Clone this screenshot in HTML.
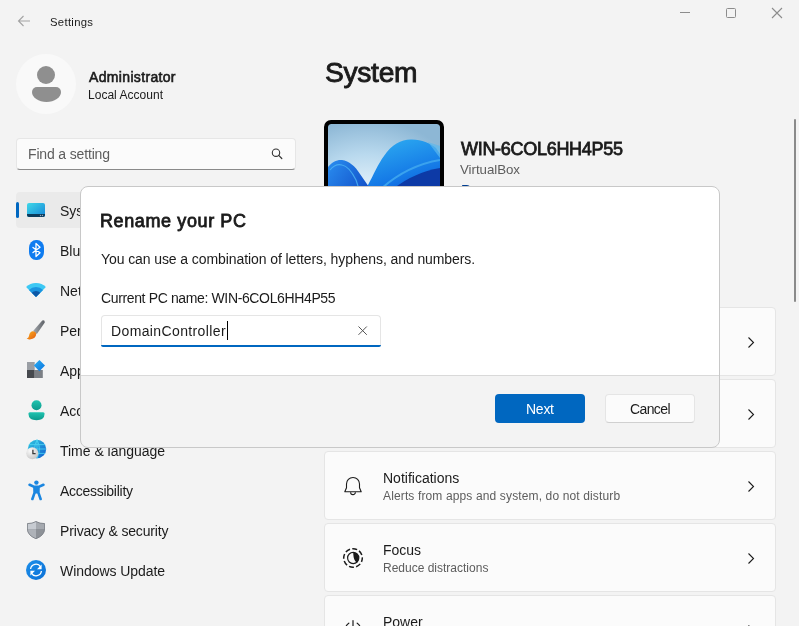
<!DOCTYPE html>
<html><head><meta charset="utf-8"><style>
html,body{margin:0;padding:0;}
body{width:799px;height:626px;overflow:hidden;background:#f3f3f3;position:relative;font-family:"Liberation Sans",sans-serif;}
.t{position:absolute;white-space:nowrap;will-change:transform;}
.r,.a{position:absolute;box-sizing:content-box;}
</style></head><body>
<svg class="a" style="left:17px;top:15px" width="14" height="12" viewBox="0 0 14 12"><path d="M1.5 6H13M6.5 1L1.5 6L6.5 11" fill="none" stroke="#a3a3a3" stroke-width="1.1"/></svg>
<div class="t" style="left:50.30px;top:11.78px;font-size:11.3px;line-height:20px;color:#1b1b1b;letter-spacing:0.310px;">Settings</div>
<div class="r" style="left:680px;top:12px;width:10px;height:1px;background:#8c8c8c"></div>
<div class="r" style="left:726px;top:8px;width:8px;height:8px;border:1px solid #8c8c8c;border-radius:1.5px"></div>
<svg class="a" style="left:771px;top:7px" width="12" height="12" viewBox="0 0 12 12"><path d="M1 1L11 11M11 1L1 11" stroke="#8c8c8c" stroke-width="1.1"/></svg>
<div class="r" style="left:16px;top:54px;width:60px;height:60px;border-radius:50%;background:#f9f9f9"></div>
<div class="r" style="left:37px;top:66px;width:18px;height:18px;border-radius:50%;background:#8f8f8f"></div>
<div class="r" style="left:31.5px;top:86.5px;width:29px;height:15px;border-radius:5px 5px 14.5px 14.5px/5px 5px 10px 10px;background:#8f8f8f"></div>
<div class="t" style="left:88.60px;top:67.15px;font-size:14px;line-height:20px;color:#1b1b1b;-webkit-text-stroke:0.6px #1b1b1b;letter-spacing:0.339px;">Administrator</div>
<div class="t" style="left:88.40px;top:84.84px;font-size:12px;line-height:20px;color:#1b1b1b;letter-spacing:0.025px;">Local Account</div>
<div class="r" style="left:16px;top:138px;width:278px;height:30px;border:1px solid #e6e6e6;border-bottom:1px solid #8a8a8a;border-radius:4px;background:#fbfbfb"></div>
<div class="t" style="left:27.75px;top:143.85px;font-size:14px;line-height:20px;color:#5d5d5d;letter-spacing:-0.155px;">Find a setting</div>
<svg class="a" style="left:270px;top:147px" width="14" height="14" viewBox="0 0 14 14"><circle cx="6" cy="5.7" r="3.7" fill="none" stroke="#333" stroke-width="1.1"/><path d="M8.7 8.4L11.8 11.5" stroke="#333" stroke-width="1.2" stroke-linecap="round"/></svg>
<div class="r" style="left:16px;top:192px;width:280px;height:36px;border-radius:4px;background:#eaeaea"></div>
<div class="r" style="left:16px;top:202px;width:3px;height:16px;border-radius:2px;background:#0067c0"></div>
<svg class="a" style="left:27px;top:203px" width="18" height="14" viewBox="0 0 18 14"><defs><linearGradient id="gs" x1="0" y1="0" x2="1" y2="1"><stop offset="0" stop-color="#40d8e8"/><stop offset="1" stop-color="#1585d8"/></linearGradient><clipPath id="cs"><rect width="18" height="14" rx="2"/></clipPath></defs><g clip-path="url(#cs)"><rect width="18" height="14" fill="url(#gs)"/><rect y="11" width="18" height="3" fill="#0b3b5c"/><circle cx="13.5" cy="12.5" r="0.7" fill="#9ab"/><circle cx="15.5" cy="12.5" r="0.7" fill="#9ab"/></g></svg>
<svg class="a" style="left:28.5px;top:240px" width="15" height="20" viewBox="0 0 15 20"><rect width="15" height="20" rx="7" ry="8" fill="#0f7cf0"/><path d="M4 7.5L11 12.8L7 16.6V3.4L11 7.2L4 12.5" fill="none" stroke="#fff" stroke-width="1.3" stroke-linejoin="round" stroke-linecap="round"/></svg>
<svg class="a" style="left:26px;top:283px" width="20" height="14" viewBox="0 0 20 14"><path d="M10 14L0.1 4.1A14 14 0 0 1 19.9 4.1Z" fill="#3cc8f4"/><path d="M10 14L2.93 6.93A10 10 0 0 1 17.07 6.93Z" fill="#1a94e0"/><path d="M10 14L5.76 9.76A6 6 0 0 1 14.24 9.76Z" fill="#0c57a6"/></svg>
<svg class="a" style="left:26px;top:320px" width="20" height="20" viewBox="0 0 20 20"><defs><linearGradient id="gb" x1="0" y1="0" x2="1" y2="1"><stop offset="0" stop-color="#f9b320"/><stop offset="1" stop-color="#e45a10"/></linearGradient><linearGradient id="gh" x1="0" y1="0" x2="1" y2="0"><stop offset="0" stop-color="#a3a7ad"/><stop offset="1" stop-color="#5d6166"/></linearGradient></defs><path d="M16.24 0.52Q18.9 -0.6 18.76 2.48L10.9 13.96L7.1 11.04Z" fill="url(#gh)"/><path d="M6.5 11.2Q9.7 10.8 10.3 13.8Q10 18.8 3.8 19.4Q1.8 19.6 0.6 18.6Q2.6 18 3 16Q3.6 11.6 6.5 11.2Z" fill="url(#gb)"/></svg>
<svg class="a" style="left:27px;top:360px" width="18" height="18" viewBox="0 0 18 18"><rect x="0" y="2" width="7.7" height="8" fill="#9a9ea4"/><rect x="0" y="10" width="7.7" height="8" fill="#46494e"/><rect x="7.7" y="10" width="8.1" height="8" fill="#7b7f85"/><defs><linearGradient id="ga" x1="0" y1="0" x2="1" y2="1"><stop offset="0" stop-color="#2bb0f5"/><stop offset="1" stop-color="#0a72dc"/></linearGradient></defs><path d="M12.4 0L18 5.6L12.4 11.2L6.8 5.6Z" fill="url(#ga)"/></svg>
<svg class="a" style="left:27.5px;top:399.5px" width="17" height="21" viewBox="0 0 17 21"><defs><linearGradient id="gt" x1="0" y1="0" x2="0" y2="1"><stop offset="0" stop-color="#20c4b0"/><stop offset="1" stop-color="#0c9a8c"/></linearGradient></defs><circle cx="8.5" cy="5.2" r="5" fill="url(#gt)"/><path d="M1.8 12.2H15.2Q16.6 12.2 16.6 13.8Q16.4 20.2 8.5 20.2Q0.6 20.2 0.4 13.8Q0.4 12.2 1.8 12.2Z" fill="url(#gt)"/></svg>
<svg class="a" style="left:26px;top:439px" width="21" height="21" viewBox="0 0 21 21"><defs><linearGradient id="gg" x1="0" y1="0" x2="1" y2="1"><stop offset="0" stop-color="#30c8e0"/><stop offset="1" stop-color="#0f5fd0"/></linearGradient><radialGradient id="gc" cx="0.35" cy="0.3" r="0.8"><stop offset="0" stop-color="#fafafa"/><stop offset="1" stop-color="#c4c4c4"/></radialGradient></defs><circle cx="11" cy="10" r="9.2" fill="url(#gg)"/><path d="M11 0.8V19.2M1.8 10H20.2M2.8 5.6H19.2M2.8 14.4H19.2M11 0.8Q6.2 10 11 19.2M11 0.8Q15.8 10 11 19.2" fill="none" stroke="#4fd6f2" stroke-width="1" opacity="0.8"/><circle cx="6.3" cy="14.2" r="6" fill="url(#gc)"/><path d="M6.9 10.8V14.6H9.6" fill="none" stroke="#3a3a3a" stroke-width="1.3"/></svg>
<svg class="a" style="left:27.5px;top:479.5px" width="17" height="21" viewBox="0 0 17 21"><circle cx="8.4" cy="2.6" r="2.2" fill="#1a86e0"/><path d="M1.6 4.8L6.2 6.9H10.8L15.4 4.8M6.6 7V12.6L4.4 19M10.4 7V12.6L12.6 19" fill="none" stroke="#1a86e0" stroke-width="2.6" stroke-linecap="round" stroke-linejoin="round"/><path d="M5.4 6.4H11.4L10.8 13.6H6Z" fill="#1a86e0"/></svg>
<svg class="a" style="left:27px;top:521px" width="18" height="18" viewBox="0 0 18 18"><defs><clipPath id="cp"><path d="M9 0.5Q12.5 2.6 17.6 2.6V8Q17.6 14.2 9 17.8Q0.4 14.2 0.4 8V2.6Q5.5 2.6 9 0.5Z"/></clipPath></defs><g clip-path="url(#cp)"><rect width="18" height="18" fill="#8a8e94"/><rect x="0" y="0" width="9" height="8.2" fill="#c7cbd1"/><rect x="9" y="0" width="9" height="8.2" fill="#a5a9af"/><rect x="0" y="8.2" width="9" height="10" fill="#aeb2b8"/><rect x="9" y="8.2" width="9" height="10" fill="#8d9197"/></g><path d="M9 0.5Q12.5 2.6 17.6 2.6V8Q17.6 14.2 9 17.8Q0.4 14.2 0.4 8V2.6Q5.5 2.6 9 0.5Z" fill="none" stroke="#7f838a" stroke-width="0.9"/></svg>
<svg class="a" style="left:26px;top:560px" width="20" height="20" viewBox="0 0 20 20"><defs><linearGradient id="gu" x1="0" y1="0" x2="1" y2="1"><stop offset="0" stop-color="#1e90ea"/><stop offset="1" stop-color="#0a6fd6"/></linearGradient></defs><circle cx="10" cy="10" r="10" fill="url(#gu)"/><path d="M4.6 9A5.4 5.4 0 0 1 14.6 6.8M15.4 11A5.4 5.4 0 0 1 5.4 13.2" fill="none" stroke="#fff" stroke-width="1.3"/><path d="M15.6 4.5V9.3H11Z M4.4 15.5V10.7H9Z" fill="#fff"/></svg>
<div class="t" style="left:59.80px;top:200.65px;font-size:14px;line-height:20px;color:#1b1b1b;">System</div>
<div class="t" style="left:59.80px;top:240.65px;font-size:14px;line-height:20px;color:#1b1b1b;">Bluetooth &amp; devices</div>
<div class="t" style="left:59.80px;top:280.65px;font-size:14px;line-height:20px;color:#1b1b1b;">Network &amp; internet</div>
<div class="t" style="left:59.80px;top:320.65px;font-size:14px;line-height:20px;color:#1b1b1b;">Personalization</div>
<div class="t" style="left:59.80px;top:360.65px;font-size:14px;line-height:20px;color:#1b1b1b;">Apps</div>
<div class="t" style="left:59.80px;top:400.65px;font-size:14px;line-height:20px;color:#1b1b1b;">Accounts</div>
<div class="t" style="left:59.80px;top:440.65px;font-size:14px;line-height:20px;color:#1b1b1b;letter-spacing:-0.020px;">Time &amp; language</div>
<div class="t" style="left:59.80px;top:480.65px;font-size:14px;line-height:20px;color:#1b1b1b;letter-spacing:-0.270px;">Accessibility</div>
<div class="t" style="left:59.80px;top:520.65px;font-size:14px;line-height:20px;color:#1b1b1b;letter-spacing:-0.161px;">Privacy &amp; security</div>
<div class="t" style="left:59.80px;top:560.65px;font-size:14px;line-height:20px;color:#1b1b1b;letter-spacing:-0.061px;">Windows Update</div>

<div class="t" style="left:324.50px;top:62.22px;font-size:28.2px;line-height:20px;color:#1b1b1b;-webkit-text-stroke:0.9px #1b1b1b;letter-spacing:-0.294px;">System</div>
<div class="r" style="left:324px;top:120px;width:112px;height:90px;border:4px solid #000;border-radius:7px;overflow:hidden;background:#000"><svg width="112" height="90" viewBox="0 0 112 90" style="display:block;border-radius:3px"><defs><radialGradient id="wb" cx="0.35" cy="0.8" r="0.85"><stop offset="0" stop-color="#eef7fd"/><stop offset="0.55" stop-color="#b9d9ee"/><stop offset="1" stop-color="#8db7d5"/></radialGradient><linearGradient id="w1" x1="0" y1="0" x2="0.3" y2="1"><stop offset="0" stop-color="#2fb0f2"/><stop offset="0.6" stop-color="#1478e6"/><stop offset="1" stop-color="#0a4ad0"/></linearGradient><linearGradient id="w2" x1="0" y1="0" x2="1" y2="1"><stop offset="0" stop-color="#2a8ef0"/><stop offset="1" stop-color="#0a3cbc"/></linearGradient></defs><rect width="112" height="90" fill="url(#wb)"/><path d="M39.5 62C46 50 50 40 56 32C64 20 74 15 84 15.5C94 16 102 19 108 24L112 30V90H39.5Z" fill="url(#w1)"/><path d="M100 18L112 22V34Z" fill="#5cb8ec" opacity="0.7"/><path d="M0 43C4 38 9 35.5 14 36C21 37 27 42 32 50L41 63V90H0Z" fill="url(#w2)"/><path d="M2 46C6 41 10 40 14 41C20 42 24 48 28 56L30 62" fill="none" stroke="#4fb6f4" stroke-width="1.2" opacity="0.8"/><path d="M66 64C80 54 94 47 112 44V90H66Z" fill="#0d3aa6"/><path d="M54 64C70 50 88 40 112 36" fill="none" stroke="#3aa2ee" stroke-width="2"/></svg></div>
<div class="t" style="left:461.00px;top:138.66px;font-size:18px;line-height:20px;color:#1b1b1b;-webkit-text-stroke:0.8px #1b1b1b;letter-spacing:-0.291px;">WIN-6COL6HH4P55</div>
<div class="t" style="left:460.30px;top:159.99px;font-size:13.3px;line-height:20px;color:#5d5d5d;letter-spacing:-0.040px;">VirtualBox</div>
<div class="t" style="left:461.00px;top:180.15px;font-size:14px;line-height:20px;color:#003e92;">Rename</div>
<div class="r" style="left:794px;top:119px;width:2px;height:183px;border-radius:1px;background:#8a8a8a"></div>
<div class="r" style="left:324px;top:307px;width:450px;height:67px;border:1px solid #e5e5e5;border-radius:4px;background:#fbfbfb"></div>
<svg class="a" style="left:746px;top:336px" width="10" height="12" viewBox="0 0 10 12"><path d="M2.5 1.5L7.5 6.5L2.5 11.5" fill="none" stroke="#1b1b1b" stroke-width="1.1"/></svg>
<div class="r" style="left:324px;top:379px;width:450px;height:67px;border:1px solid #e5e5e5;border-radius:4px;background:#fbfbfb"></div>
<svg class="a" style="left:746px;top:408px" width="10" height="12" viewBox="0 0 10 12"><path d="M2.5 1.5L7.5 6.5L2.5 11.5" fill="none" stroke="#1b1b1b" stroke-width="1.1"/></svg>
<div class="r" style="left:324px;top:451px;width:450px;height:67px;border:1px solid #e5e5e5;border-radius:4px;background:#fbfbfb"></div>
<svg class="a" style="left:746px;top:480px" width="10" height="12" viewBox="0 0 10 12"><path d="M2.5 1.5L7.5 6.5L2.5 11.5" fill="none" stroke="#1b1b1b" stroke-width="1.1"/></svg>
<svg class="a" style="left:343px;top:476px" width="20" height="21" viewBox="0 0 20 21"><path d="M10 1.5C6.3 1.5 3.5 4.3 3.5 8V11.8L1.8 15.8H18.2L16.5 11.8V8C16.5 4.3 13.7 1.5 10 1.5Z" fill="none" stroke="#1b1b1b" stroke-width="1.1" stroke-linejoin="round"/><path d="M7.6 16.2A2.4 2.4 0 0 0 12.4 16.2" fill="none" stroke="#1b1b1b" stroke-width="1.1"/></svg>
<div class="t" style="left:383.00px;top:468.15px;font-size:14px;line-height:20px;color:#1b1b1b;">Notifications</div>
<div class="t" style="left:383.00px;top:485.84px;font-size:12px;line-height:20px;color:#5d5d5d;letter-spacing:0.134px;">Alerts from apps and system, do not disturb</div>
<div class="r" style="left:324px;top:523px;width:450px;height:67px;border:1px solid #e5e5e5;border-radius:4px;background:#fbfbfb"></div>
<svg class="a" style="left:746px;top:552px" width="10" height="12" viewBox="0 0 10 12"><path d="M2.5 1.5L7.5 6.5L2.5 11.5" fill="none" stroke="#1b1b1b" stroke-width="1.1"/></svg>
<svg class="a" style="left:342px;top:547px" width="22" height="22" viewBox="0 0 22 22"><circle cx="11" cy="11" r="9.3" fill="none" stroke="#1b1b1b" stroke-width="1.5" stroke-dasharray="5 2.3" stroke-dashoffset="1"/><circle cx="11.2" cy="11" r="5.6" fill="none" stroke="#1b1b1b" stroke-width="1.2"/><path d="M11.2 5.4A5.6 5.6 0 0 1 14.6 15.4C12.4 13.6 11.4 11 11.2 5.4Z" fill="#1b1b1b"/></svg>
<div class="t" style="left:383.00px;top:540.15px;font-size:14px;line-height:20px;color:#1b1b1b;">Focus</div>
<div class="t" style="left:383.00px;top:557.84px;font-size:12px;line-height:20px;color:#5d5d5d;">Reduce distractions</div>
<div class="r" style="left:324px;top:595px;width:450px;height:67px;border:1px solid #e5e5e5;border-radius:4px;background:#fbfbfb"></div>
<svg class="a" style="left:746px;top:624px" width="10" height="12" viewBox="0 0 10 12"><path d="M2.5 1.5L7.5 6.5L2.5 11.5" fill="none" stroke="#1b1b1b" stroke-width="1.1"/></svg>
<svg class="a" style="left:343px;top:619px" width="20" height="20" viewBox="0 0 20 20"><path d="M10 1.5V9M5.8 4.2A7.6 7.6 0 1 0 14.2 4.2" fill="none" stroke="#1b1b1b" stroke-width="1.2" stroke-linecap="round"/></svg>
<div class="t" style="left:383.00px;top:612.15px;font-size:14px;line-height:20px;color:#1b1b1b;">Power</div>

<div class="r" style="left:80px;top:186px;width:638px;height:260px;border:1px solid #c8c8c8;border-radius:8px;background:linear-gradient(#fff 0,#fff 188px,#d9d9d9 188px,#d9d9d9 189px,#f3f3f3 189px)"></div>
<div class="t" style="left:100.20px;top:211.36px;font-size:18px;line-height:20px;color:#1b1b1b;-webkit-text-stroke:0.8px #1b1b1b;letter-spacing:0.608px;">Rename your PC</div>
<div class="t" style="left:101.20px;top:249.15px;font-size:14px;line-height:20px;color:#1b1b1b;letter-spacing:-0.089px;">You can use a combination of letters, hyphens, and numbers.</div>
<div class="t" style="left:101.00px;top:288.15px;font-size:14px;line-height:20px;color:#1b1b1b;letter-spacing:-0.364px;">Current PC name: WIN-6COL6HH4P55</div>
<div class="r" style="left:101px;top:315px;width:278px;height:30px;border:1px solid #e5e5e5;border-bottom:none;border-radius:4px 4px 0 0;background:#fff"></div>
<div class="r" style="left:101px;top:345px;width:280px;height:2px;border-radius:0 0 4px 4px;background:#0067c0"></div>
<div class="t" style="left:111.20px;top:321.15px;font-size:14px;line-height:20px;color:#1b1b1b;letter-spacing:0.375px;">DomainController</div>
<div class="r" style="left:227px;top:321px;width:1px;height:19px;background:#000"></div>
<svg class="a" style="left:357px;top:325px" width="11" height="11" viewBox="0 0 11 11"><path d="M1.5 1.5L9.8 9.8M9.8 1.5L1.5 9.8" stroke="#555" stroke-width="1"/></svg>
<div class="r" style="left:495px;top:394px;width:90px;height:29px;border-radius:4px;background:#0067c0"></div>
<div class="t" style="left:526.30px;top:399.45px;font-size:14px;line-height:20px;color:#fff;letter-spacing:-0.260px;">Next</div>
<div class="r" style="left:605px;top:394px;width:88px;height:27px;border:1px solid #e5e5e5;border-bottom-color:#d0d0d0;border-radius:4px;background:#fbfbfb"></div>
<div class="t" style="left:630.00px;top:399.45px;font-size:14px;line-height:20px;color:#1b1b1b;letter-spacing:-0.613px;">Cancel</div>

</body></html>
